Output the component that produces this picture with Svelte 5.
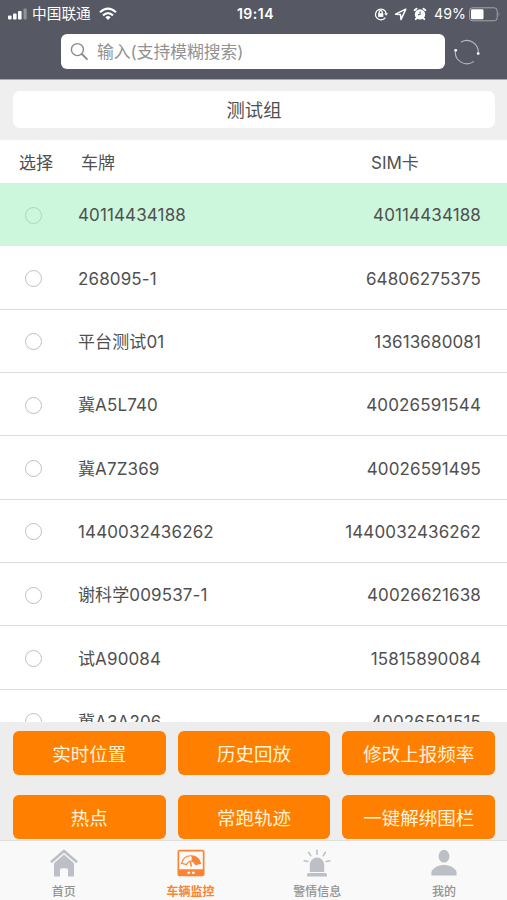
<script lang="ts">
  interface Vehicle {
    plate: string;
    sim: string;
  }

  const vehicles: Vehicle[] = [
    { plate: '40114434188', sim: '40114434188' },
    { plate: '268095-1', sim: '64806275375' },
    { plate: '平台测试01', sim: '13613680081' },
    { plate: '冀A5L740', sim: '40026591544' },
    { plate: '冀A7Z369', sim: '40026591495' },
    { plate: '1440032436262', sim: '1440032436262' },
    { plate: '谢科学009537-1', sim: '40026621638' },
    { plate: '试A90084', sim: '15815890084' },
    { plate: '冀A3A206', sim: '40026591515' },
  ];

  const actions = ['实时位置', '历史回放', '修改上报频率', '热点', '常跑轨迹', '一键解绑围栏'];

  const tabs = [
    { id: 'home', label: '首页' },
    { id: 'monitor', label: '车辆监控' },
    { id: 'alarm', label: '警情信息' },
    { id: 'mine', label: '我的' },
  ];

  let selected = $state(0);
  let activeTab = $state('monitor');
  let query = $state('');
</script>

<div class="screen">
  <header>
    <div class="status">
      <div class="status-side">
        <svg class="signal" width="20" height="12" viewBox="0 0 20 12" fill="#fff">
          <rect x="0" y="7.5" width="3.6" height="4" rx="1" />
          <rect x="5" y="5.5" width="3.6" height="6" rx="1" />
          <rect x="10" y="3" width="3.6" height="8.5" rx="1" />
          <rect x="15.5" y="0.5" width="3.2" height="11" rx="1" opacity="0.35" />
        </svg>
        <span class="carrier">中国联通</span>
        <svg class="wifi" width="18" height="14" viewBox="0 0 18 14" fill="none" stroke="#fff" stroke-width="2.2">
          <path d="M1 5.2Q9 -2 17 5.2" />
          <path d="M4 8.4Q9 4 14 8.4" />
          <path d="M6.4 10.2Q9 8 11.6 10.2L9 13Z" fill="#fff" stroke="none" />
        </svg>
      </div>
      <span class="clock">19:14</span>
      <div class="status-side right">
        <svg width="14" height="14" viewBox="0 0 14 14" fill="none" stroke="#fff" stroke-width="1.3">
          <path d="M11.3 10.6A5.4 5.4 0 1 1 12.2 6.5" />
          <path d="M10.2 6.3h3.8l-1.9 2.5z" fill="#fff" stroke="none" />
          <rect x="4.1" y="6.2" width="5.2" height="3.7" fill="#fff" stroke="none" />
          <path d="M5.2 6.5V5.2a1.5 1.5 0 0 1 3 0v1.3" />
        </svg>
        <svg width="13" height="13" viewBox="0 0 13 13" fill="none" stroke="#fff" stroke-width="1.5" stroke-linejoin="round">
          <path d="M11.8 1.1 1.5 6.2l5 .4.5 5z" />
        </svg>
        <svg width="14" height="14" viewBox="0 0 14 14">
          <path d="M1.6 3.3 3.6 1.6M12.4 3.3l-2-1.7M3.5 11.3l-.8.9M10.5 11.3l.8.9" stroke="#fff" stroke-width="1.8" stroke-linecap="round" />
          <circle cx="7" cy="7.4" r="5.2" fill="#fff" />
          <path d="M7.1 4.5v3.2H5" fill="none" stroke="#565863" stroke-width="1" />
        </svg>
        <span class="percent">49%</span>
        <svg class="battery" width="32" height="15" viewBox="0 0 32 15">
          <rect x="0.6" y="0.8" width="27.6" height="13" rx="3" fill="none" stroke="#a5a6ad" stroke-width="1" />
          <rect x="2" y="2.3" width="12.5" height="10" rx="1.2" fill="#fff" />
          <path d="M29.7 5.2q1.7 2.1 0 4.2z" fill="#a5a6ad" />
        </svg>
      </div>
    </div>
    <div class="search-row">
      <label class="search">
        <svg width="20" height="20" viewBox="0 0 20 20" fill="none" stroke="#8b8b8d" stroke-width="1.4" stroke-linecap="round">
          <circle cx="7.4" cy="7.6" r="6" />
          <path d="m11.8 12 5.2 5.2" stroke-width="1.8" />
        </svg>
        <input type="text" placeholder="输入(支持模糊搜索)" bind:value={query} />
      </label>
      <button class="refresh" aria-label="刷新">
        <svg width="28" height="28" viewBox="0 0 28 28" fill="none" stroke="#b9bac0" stroke-width="1.1" stroke-linecap="round">
          <path d="M8.3 3.9A11.5 11.5 0 0 1 25.2 15.2" />
          <path d="M2.6 12A11.5 11.5 0 0 0 20.5 23.6" />
          <circle cx="25.2" cy="15.6" r="1.4" fill="#fff" stroke="none" />
          <circle cx="2.7" cy="12.3" r="1.4" fill="#fff" stroke="none" />
        </svg>
      </button>
    </div>
  </header>

  <div class="group-bar">
    <div class="group">测试组</div>
  </div>

  <div class="table-head">
    <span class="col-check">选择</span>
    <span class="col-plate">车牌</span>
    <span>SIM卡</span>
  </div>

  <main>
    {#each vehicles as vehicle, i (i)}
      <button class="row" class:selected={i === selected} onclick={() => (selected = i)}>
        <span class="radio"></span>
        <span class="plate">{vehicle.plate}</span>
        <span class="sim">{vehicle.sim}</span>
      </button>
    {/each}
  </main>

  <div class="actions">
    {#each actions as action}
      <button>{action}</button>
    {/each}
  </div>

  <nav>
    {#each tabs as tab (tab.id)}
      <button class="tab" class:active={tab.id === activeTab} onclick={() => (activeTab = tab.id)}>
        <svg width="28" height="28" viewBox="0 0 28 28">
          {#if tab.id === 'home'}
            <path d="M1.8 12.5 14 1.9l12.2 10.6" fill="none" stroke="currentColor" stroke-width="2.6" stroke-linecap="round" stroke-linejoin="round" />
            <path d="M14 5.6 24 14.2V26.5q0 1-1 1h-5V20.8q0-1.6-1.6-1.6h-4.8q-1.6 0-1.6 1.6v6.7H5q-1 0-1-1V14.2z" fill="currentColor" />
          {:else if tab.id === 'monitor'}
            <path fill-rule="evenodd" d="M2.5.7h23Q27.5.7 27.5 2.7v22.6q0 2-2 2h-23q-2 0-2-2V2.7q0-2 2-2zM2.2 2.4v17.8h23.6V2.4z" fill="currentColor" />
            <path d="M4.5 14.3C7.2 4.3 20.8 4.3 23.5 14.3L18.7 15.6Q14 8.3 9.3 15.6z" fill="none" stroke="currentColor" stroke-width="1.1" />
            <path d="M14.5 6.8C18.9 7 22.2 9.6 23.5 14.3l-4.8 1.3q-1.4-2.6-4-3.5z" fill="currentColor" />
            <path d="M13.4 13 14.2 17" stroke="currentColor" stroke-width="1.5" stroke-linecap="round" />
            <path d="M10.5 22.8h2.6v2h-2.6zM15 22.8h2.6v2H15z" fill="#fff" />
          {:else if tab.id === 'alarm'}
            <path d="M6.8 23V15.8a7.2 7.2 0 0 1 14.4 0V23zM6 24h16q2 0 2 2v1.5H4V26q0-2 2-2z" fill="currentColor" />
            <path d="M14 1.2v4M5.7 3.4l2 3.3M22.3 3.4l-2 3.3M1.2 11.8l3.6.7M26.8 11.8l-3.6.7" stroke="currentColor" stroke-width="1.6" stroke-linecap="round" />
          {:else}
            <ellipse cx="14" cy="7.2" rx="5.4" ry="6.4" fill="currentColor" />
            <path d="M1.4 26.6V23C3.4 18.2 8.5 16 14 16s10.6 2.2 12.6 7v3.6z" fill="currentColor" />
          {/if}
        </svg>
        <span>{tab.label}</span>
      </button>
    {/each}
  </nav>
</div>

<style>
  :global(body) {
    margin: 0;
  }

  .screen {
    display: flex;
    flex-direction: column;
    width: 507px;
    height: 900px;
    overflow: hidden;
    background: #fff;
    color: #505050;
    font-family: Inter, "Noto Sans CJK SC", sans-serif;
    font-size: 17px;
  }

  button {
    padding: 0;
    border: 0;
    background: none;
    color: inherit;
    font: inherit;
    cursor: pointer;
  }

  svg {
    display: block;
    flex: none;
  }

  header {
    flex: none;
    box-sizing: border-box;
    height: 80px;
    border-bottom: 1px solid #a9aab0;
    background: #565863;
    color: #fff;
  }

  .status {
    display: grid;
    grid-template-columns: 1fr auto 1fr;
    align-items: center;
    height: 28px;
    padding: 0 6px 0 8px;
    font-size: 14px;
    line-height: 20px;
  }

  .status-side {
    display: flex;
    align-items: center;
  }

  .status-side.right {
    justify-content: flex-end;
    gap: 6px;
  }

  .carrier {
    margin: 0 8px 0 4px;
    font-size: 14.7px;
  }

  .clock {
    padding-left: 2px;
    font-size: 14px;
    font-weight: 600;
    letter-spacing: 0.5px;
  }

  .percent {
    margin-left: 1px;
    font-size: 14.2px;
  }

  .battery {
    margin-left: -3px;
  }

  .search-row {
    display: flex;
    align-items: center;
    margin: 6px 0 0 61px;
  }

  .search {
    display: flex;
    align-items: center;
    box-sizing: border-box;
    width: 384px;
    height: 35px;
    padding-left: 9px;
    border-radius: 6px;
    background: #fff;
  }

  .search input {
    flex: 1;
    min-width: 0;
    margin-left: 7px;
    padding: 0;
    border: 0;
    outline: 0;
    background: none;
    font: inherit;
    font-size: 16.8px;
  }

  .search input::placeholder {
    color: #929292;
  }

  .refresh {
    margin-left: 8px;
  }

  .group-bar {
    flex: none;
    box-sizing: border-box;
    height: 60px;
    padding: 11px 12px 12px 13px;
    background: #efeff0;
  }

  .group {
    height: 37px;
    border-radius: 7px;
    background: #fff;
    font-size: 18.3px;
    line-height: 38px;
    text-align: center;
  }

  .table-head {
    display: flex;
    flex: none;
    align-items: center;
    box-sizing: border-box;
    height: 43px;
    padding: 0 0 1px 19px;
  }

  .col-check {
    width: 62px;
  }

  .col-plate {
    width: 290px;
  }

  main {
    flex: 1;
    min-height: 0;
    overflow: hidden;
  }

  .row {
    display: flex;
    align-items: center;
    box-sizing: border-box;
    width: 100%;
    height: 63.35px;
    padding: 2px 26px 0 25px;
    border-bottom: 1px solid #dcdcdc;
    line-height: 20px;
    letter-spacing: 0.12px;
    text-align: left;
  }

  .row.selected {
    border-color: #ccf7dc;
    background: #ccf7dc;
  }

  .radio {
    box-sizing: border-box;
    width: 17px;
    height: 17px;
    margin-right: 36px;
    border: 1px solid #bfbfbf;
    border-radius: 50%;
  }

  .selected .radio {
    border-color: #aed3bc;
  }

  .sim {
    margin-left: auto;
  }

  .actions {
    display: grid;
    flex: none;
    grid-template-columns: repeat(3, 1fr);
    grid-auto-rows: 44px;
    gap: 20px 12px;
    box-sizing: border-box;
    height: 118px;
    padding: 9px 12px 0 13px;
    background: #ededed;
  }

  .actions button {
    padding-bottom: 1px;
    border-radius: 6px;
    background: #ff8000;
    color: #fff3df;
    font-size: 18.5px;
  }

  nav {
    display: grid;
    flex: none;
    grid-template-columns: repeat(4, 1fr);
    box-sizing: border-box;
    height: 60px;
    border-top: 1px solid #dedede;
    background: #f9f9f9;
  }

  .tab {
    display: flex;
    flex-direction: column;
    align-items: center;
    padding: 8px 0 0 1px;
    color: #bcbfc5;
    font-size: 12px;
    font-weight: 500;
    line-height: 18px;
  }

  .tab span {
    margin-top: 6px;
    color: #929292;
  }

  .tab.active,
  .tab.active span {
    color: #fb8532;
  }

  .tab.active span {
    font-weight: 700;
  }
</style>
